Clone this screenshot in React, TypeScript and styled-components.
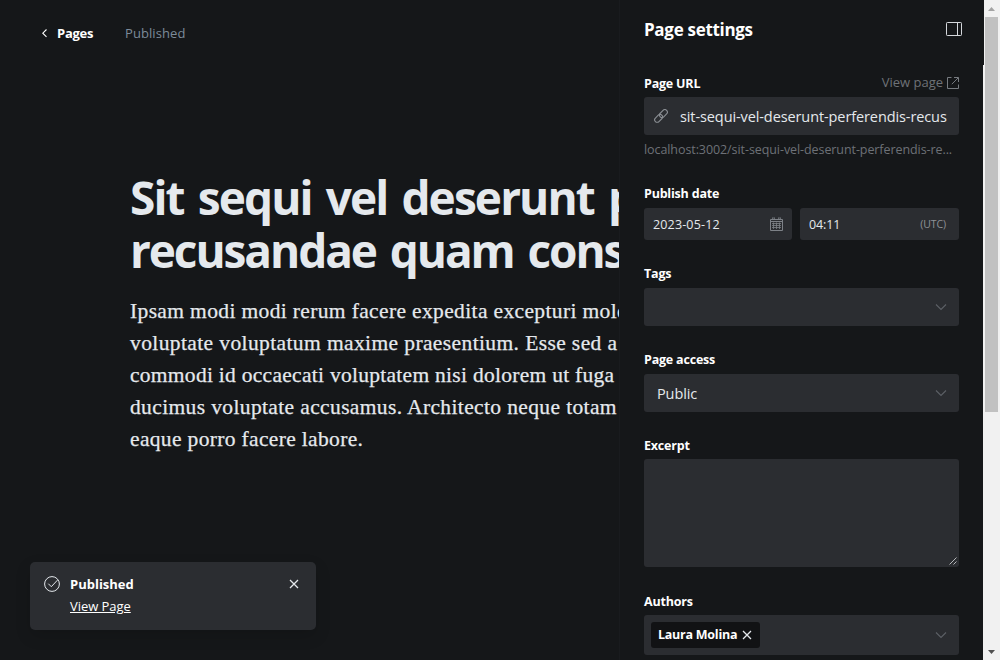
import React from "react";
import styled, { createGlobalStyle } from "styled-components";

const GlobalStyle = createGlobalStyle`
  * { box-sizing: border-box; }
  body { margin: 0; background: #151719; overflow: hidden; }
`;

const ui = `"Open Sans", "Noto Sans", sans-serif`;

const Screen = styled.div`
  position: relative;
  display: flex;
  width: 1000px;
  height: 660px;
  overflow: hidden;
  background: #151719;
  color: #fff;
  font-family: ${ui};
`;

const Editor = styled.main`
  width: 619px;
  height: 660px;
  overflow: hidden;
`;

const TopBar = styled.header`
  display: flex;
  align-items: center;
  height: 66px;
  padding-left: 41px;
  font-size: 13px;
  line-height: 20px;
`;

const BackLink = styled.a`
  display: flex;
  align-items: center;
  gap: 8px;
  width: 84px;
  font-weight: 700;
  letter-spacing: -0.25px;
`;

const Status = styled.span`
  color: #7c8b9a;
  letter-spacing: 0.08px;
`;

const Article = styled.article`
  padding: 105px 0 0 130px;
  white-space: nowrap;
`;

const Title = styled.h1`
  margin: 0;
  color: #e5e9ed;
  font-size: 46px;
  font-weight: 700;
  line-height: 53px;
  word-spacing: 4px;
`;

const Body = styled.p`
  margin: 18px 0 0;
  color: #e5e9ed;
  font-family: "Liberation Serif", serif;
  font-size: 21.5px;
  line-height: 32px;
  -webkit-text-stroke: 0.25px #e5e9ed;
`;

const Line = styled.span<{ $track?: number }>`
  display: block;
  letter-spacing: ${(p) => p.$track ?? 0}px;
`;

const Panel = styled.aside`
  width: 364px;
  height: 660px;
  border-left: 1px solid #191b1e;
`;

const PanelHeader = styled.div`
  position: relative;
  z-index: 1;
  display: flex;
  align-items: center;
  justify-content: space-between;
  height: 65px;
  margin-right: -1px;
  padding: 0 22px 6px 24px;
  background: #151719;
`;

const PanelTitle = styled.h4`
  margin: 0;
  padding-top: 1px;
  font-size: 17px;
  font-weight: 700;
  line-height: 24px;
  letter-spacing: -0.3px;
`;

const Form = styled.div`
  padding: 10px 24px 0;
`;

const Field = styled.section<{ $gap?: number }>`
  margin-bottom: ${(p) => p.$gap ?? 25}px;
`;

const LabelRow = styled.div<{ $space?: number }>`
  display: flex;
  justify-content: space-between;
  height: 16px;
  margin-bottom: ${(p) => p.$space ?? 7}px;
  line-height: 16px;
`;

const Label = styled.label`
  padding-top: 1px;
  font-size: 12.5px;
  font-weight: 700;
  letter-spacing: -0.2px;
`;

const ViewLink = styled.a`
  display: flex;
  align-items: center;
  gap: 4px;
  height: 14px;
  color: #6e7277;
  font-size: 13px;

  svg {
    position: relative;
    top: 1px;
  }
`;

const Control = styled.div<{ $h?: number; $w?: number; $pad?: string }>`
  display: flex;
  align-items: center;
  justify-content: space-between;
  width: ${(p) => (p.$w ? `${p.$w}px` : "100%")};
  height: ${(p) => p.$h ?? 38}px;
  padding: ${(p) => p.$pad ?? "0 12px"};
  border-radius: 3px;
  background: #2b2d31;
  color: #e5e9ed;
`;

const Value = styled.span<{ $size?: number; $track?: number; $indent?: number }>`
  flex: 1;
  margin-left: ${(p) => p.$indent ?? 0}px;
  padding-top: 1px;
  font-size: ${(p) => p.$size ?? 14.5}px;
  line-height: 20px;
  letter-spacing: ${(p) => p.$track ?? -0.1}px;
  white-space: nowrap;
`;

const Zone = styled.span`
  color: #8e9196;
  font-size: 10.5px;
  letter-spacing: -0.1px;
`;

const Hint = styled.p`
  height: 16px;
  margin: 6px 0 0;
  padding-top: 1px;
  color: #6d7177;
  font-size: 12.5px;
  line-height: 16px;
  letter-spacing: -0.08px;
  white-space: nowrap;
`;

const Pair = styled.div`
  display: flex;
  gap: 8px;
`;

const TextArea = styled(Control)`
  align-items: flex-end;
  justify-content: flex-end;
`;

const Chip = styled.span`
  display: flex;
  align-items: center;
  justify-content: space-between;
  width: 109px;
  height: 26px;
  padding: 0 8px 1px 7px;
  border-radius: 3px;
  background: #111214;
  color: #fff;
  font-size: 12.5px;
  font-weight: 700;
  letter-spacing: -0.25px;
  white-space: nowrap;
`;

const Scrollbar = styled.div`
  display: flex;
  flex-direction: column;
  align-items: center;
  width: 17px;
  height: 660px;
  background: #f1f1f1;
`;

const ScrollButton = styled.div`
  display: flex;
  align-items: center;
  justify-content: center;
  height: 17px;
`;

const ScrollTrack = styled.div`
  width: 13px;
  height: 626px;
`;

const ScrollThumb = styled.div`
  height: 395px;
  background: #c1c1c1;
`;

const Toast = styled.aside`
  position: absolute;
  left: 30px;
  top: 562px;
  display: flex;
  width: 286px;
  height: 68px;
  padding: 14px 17px 0 14px;
  border-radius: 5px;
  background: #2b2d31;
  box-shadow: 0 6px 16px rgba(0, 0, 0, 0.14);
`;

const ToastText = styled.div`
  flex: 1;
  margin: -3px 0 0 10px;
  font-size: 13px;
  line-height: 22px;
`;

const ToastTitle = styled.div`
  font-weight: 700;
  letter-spacing: 0;
`;

const ToastLink = styled.a`
  text-decoration: underline;
  letter-spacing: -0.05px;
`;

const ToastClose = styled.span`
  padding-top: 3px;
  line-height: 0;
`;

const Cross = ({ size = 10, color = "#e5e9ed" }) => (
  <svg width={size} height={size} viewBox="0 0 10 10" fill="none" stroke={color} strokeWidth="1.25">
    <path d="M1 1l8 8M9 1l-8 8" />
  </svg>
);

const Chevron = () => (
  <svg width="12" height="8" viewBox="0 0 12 8" fill="none" stroke="#5c6066" strokeWidth="1.1">
    <path d="M1 1.5l5 5 5-5" />
  </svg>
);

const BackIcon = () => (
  <svg width="8" height="9" viewBox="0 0 8 9" fill="none" stroke="#fff" strokeWidth="1.1">
    <path d="M5.5.5L1.8 4.2l3.7 3.7" />
  </svg>
);

const SidebarIcon = () => (
  <svg width="16" height="16" viewBox="0 0 16 16" fill="none" stroke="#d5d8dc">
    <rect x=".5" y=".5" width="15" height="13" rx=".8" />
    <path d="M11.5.5v13" />
  </svg>
);

const ExternalIcon = () => (
  <svg width="12" height="12" viewBox="0 0 12 12" fill="none" stroke="#777b80">
    <path d="M4.5.5h-4v11h11v-4M7 .5h4.5V5M11.2.8L4.8 7.2" />
  </svg>
);

const LinkIcon = () => (
  <svg width="14" height="14" viewBox="0 0 14 14" fill="none" stroke="#8b8f94" strokeWidth="1.1">
    <g transform="rotate(-45 7 7)">
      <rect x="-.9" y="4.5" width="9" height="5" rx="2.5" />
      <rect x="5.9" y="4.5" width="9" height="5" rx="2.5" />
    </g>
  </svg>
);

const CalendarIcon = () => (
  <svg width="13" height="14" viewBox="0 0 13 14" fill="none" stroke="#7d8187">
    <path d="M.5 2.5h12v11H.5zM.5 4.5h12" />
    <path d="M2.5 1h2M8.5 1h2M2.5 .5v2.5M4.5 .5v2.5M8.5 .5v2.5M10.5 .5v2.5" strokeWidth=".7" />
    <path d="M2 6.5h9M2 8.5h9M2 10.5h9M3.5 5.5v6.5M6.5 5.5v6.5M9.5 5.5v6.5" strokeWidth=".8" />
  </svg>
);

const CheckIcon = () => (
  <svg width="16" height="16" viewBox="0 0 16 16" fill="none" stroke="#e5e9ed">
    <circle cx="8" cy="8" r="7.4" />
    <path d="M4.3 7.7l3 3 6.2-6.6" />
  </svg>
);

const ResizeGrip = () => (
  <svg width="8" height="8" viewBox="0 0 8 8" stroke="#c6c8ca" strokeWidth=".9">
    <path d="M.5 7.5l7-7M4.5 7.5l3-3" />
  </svg>
);

const Arrow = ({ down = false }) => (
  <svg width="7" height="4" viewBox="0 0 7 4" fill={down ? "#505050" : "#a3a3a3"}>
    <path d={down ? "M0 0h7L3.5 4z" : "M0 4h7L3.5 0z"} />
  </svg>
);

export default function App() {
  return (
    <Screen>
      <GlobalStyle />
      <Editor>
        <TopBar>
          <BackLink><BackIcon />Pages</BackLink>
          <Status>Published</Status>
        </TopBar>
        <Article>
          <Title>
            <Line $track={-1.9}>Sit sequi vel deserunt p</Line>
            <Line $track={-2.1}>recusandae quam cons</Line>
          </Title>
          <Body>
            <Line $track={0.36}>Ipsam modi modi rerum facere expedita excepturi mole</Line>
            <Line $track={0.39}>voluptate voluptatum maxime praesentium. Esse sed a</Line>
            <Line $track={0.28}>commodi id occaecati voluptatem nisi dolorem ut fuga</Line>
            <Line $track={0.37}>ducimus voluptate accusamus. Architecto neque totam</Line>
            <Line $track={0.34}>eaque porro facere labore.</Line>
          </Body>
        </Article>
      </Editor>
      <Panel>
        <PanelHeader>
          <PanelTitle>Page settings</PanelTitle>
          <SidebarIcon />
        </PanelHeader>
        <Form>
          <Field $gap={28}>
            <LabelRow $space={6}>
              <Label>Page URL</Label>
              <ViewLink>View page<ExternalIcon /></ViewLink>
            </LabelRow>
            <Control $pad="0 12px 0 10px">
              <LinkIcon />
              <Value $indent={12}>sit-sequi-vel-deserunt-perferendis-recus</Value>
            </Control>
            <Hint>localhost:3002/sit-sequi-vel-deserunt-perferendis-re...</Hint>
          </Field>
          <Field>
            <LabelRow><Label>Publish date</Label></LabelRow>
            <Pair>
              <Control $w={148} $h={32} $pad="0 9px"><Value $size={12.5} $track={0.15}>2023-05-12</Value><CalendarIcon /></Control>
              <Control $w={159} $h={32} $pad="0 13px 0 9px"><Value $size={12.5}>04:11</Value><Zone>(UTC)</Zone></Control>
            </Pair>
          </Field>
          <Field>
            <LabelRow><Label>Tags</Label></LabelRow>
            <Control><Value /><Chevron /></Control>
          </Field>
          <Field>
            <LabelRow><Label>Page access</Label></LabelRow>
            <Control $pad="0 12px 0 13px"><Value>Public</Value><Chevron /></Control>
          </Field>
          <Field $gap={26}>
            <LabelRow $space={6}><Label>Excerpt</Label></LabelRow>
            <TextArea $h={108} $pad="0 2px 2px 0"><ResizeGrip /></TextArea>
          </Field>
          <Field>
            <LabelRow $space={6}><Label>Authors</Label></LabelRow>
            <Control $h={40} $pad="0 12px 0 7px"><Chip>Laura Molina<Cross /></Chip><Chevron /></Control>
          </Field>
        </Form>
      </Panel>
      <Scrollbar>
        <ScrollButton><Arrow /></ScrollButton>
        <ScrollTrack><ScrollThumb /></ScrollTrack>
        <ScrollButton><Arrow down /></ScrollButton>
      </Scrollbar>
      <Toast>
        <CheckIcon />
        <ToastText>
          <ToastTitle>Published</ToastTitle>
          <ToastLink>View Page</ToastLink>
        </ToastText>
        <ToastClose><Cross /></ToastClose>
      </Toast>
    </Screen>
  );
}
